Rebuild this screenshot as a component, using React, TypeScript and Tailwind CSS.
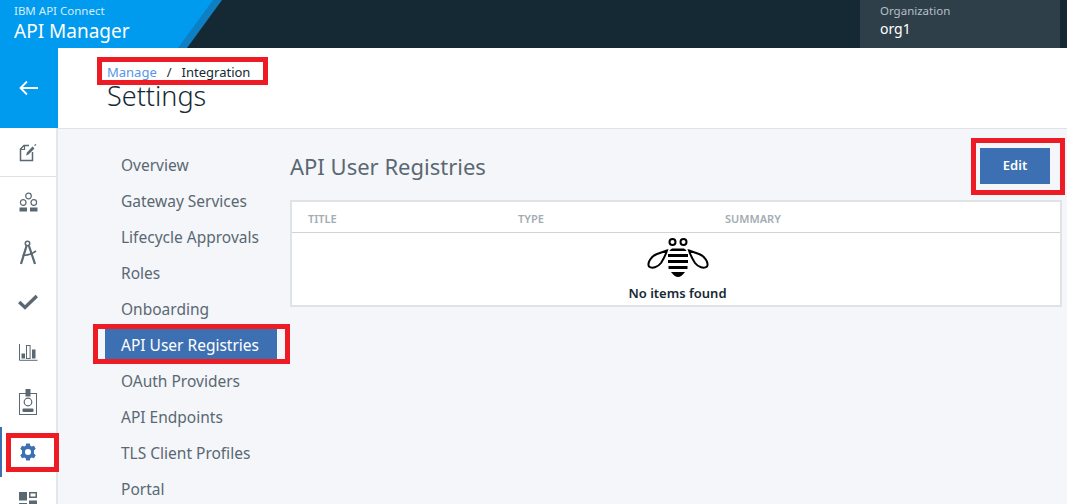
const sans = "font-['Noto_Sans','Liberation_Sans',sans-serif]";

const navItems = [
  "Overview",
  "Gateway Services",
  "Lifecycle Approvals",
  "Roles",
  "Onboarding",
  "API User Registries",
  "OAuth Providers",
  "API Endpoints",
  "TLS Client Profiles",
  "Portal",
];

function EditIcon() {
  return (
    <svg width="18" height="19" viewBox="0 0 18 19" fill="none" stroke="#5a6872" strokeWidth="1.5">
      <path d="M10 2.500H5L1.500 6V17.500H13.500V9" />
      <path d="M1.500 6.500H5.500V2.500" strokeWidth="1.2" />
      <path d="M7 12.500L8 9.500L13.500 3.500L15.500 5.500L9.500 11.500Z" fill="#5a6872" stroke="none" />
      <path d="M15.500 2.500L17 1.500" strokeWidth="1.4" />
    </svg>
  );
}

function PeopleIcon() {
  return (
    <svg width="19" height="20" viewBox="0 0 19 20" fill="none" stroke="#5a6872" strokeWidth="1.2">
      <circle cx="9.500" cy="4" r="2.800" />
      <circle cx="4.200" cy="10.500" r="2.800" />
      <circle cx="14.800" cy="10.500" r="2.800" />
      <rect x=".5" y="15.500" width="7.500" height="4" fill="#5a6872" stroke="none" />
      <rect x="11" y="15.500" width="7.500" height="4" fill="#5a6872" stroke="none" />
    </svg>
  );
}

function CompassIcon() {
  return (
    <svg width="18" height="25" viewBox="0 0 18 25" fill="none" stroke="#5a6872" strokeWidth="2.200">
      <circle cx="8.500" cy="3.500" r="2.200" strokeWidth="1.500" />
      <path d="M7.500 6L2 24" />
      <path d="M10 6L16 24" />
      <path d="M3.500 15.500C8 15.500 13 14 17 11" strokeWidth="1.700" />
    </svg>
  );
}

function CheckIcon() {
  return (
    <svg width="20" height="16" viewBox="0 0 20 16" fill="none" stroke="#5a6872" strokeWidth="3.400">
      <path d="M1.200 8L7 13.400L18.800 2" />
    </svg>
  );
}

function ChartIcon() {
  return (
    <svg width="19" height="17" viewBox="0 0 19 17" fill="none" stroke="#5a6872" strokeWidth="1">
      <path d="M.5 0V16.300H18.500" />
      <rect x="2.500" y="9.500" width="3.500" height="5" fill="#5a6872" stroke="none" />
      <rect x="7.500" y="1.500" width="3.600" height="13" />
      <rect x="13" y="5.500" width="3.500" height="9" fill="#5a6872" stroke="none" />
    </svg>
  );
}

function BadgeIcon() {
  return (
    <svg width="18" height="26" viewBox="0 0 18 26" fill="none" stroke="#5a6872" strokeWidth="1">
      <rect x=".5" y="4.500" width="17" height="21" />
      <rect x="6.500" y="0" width="5" height="7.500" fill="#5a6872" stroke="none" />
      <circle cx="9" cy="13" r="3.800" strokeWidth="1.200" />
      <rect x="3.500" y="19.500" width="11" height="3.500" rx="1" fill="#5a6872" stroke="none" />
    </svg>
  );
}

function GearIcon() {
  return (
    <svg width="18" height="18" viewBox="0 0 20 20" fill="#3d70b2">
      <path
        fillRule="evenodd"
        d="M8 .5h4l.6 2.600 1.500.8 2.500-.9 2 3.400-2 1.900v3.400l2 1.900-2 3.400-2.500-.9-1.500.8-.6 2.600H8l-.6-2.600-1.500-.8-2.500.9-2-3.400 2-1.900V8.300l-2-1.900 2-3.400 2.500.9 1.500-.8ZM10 6.600a3.400 3.400 0 1 0 0 6.800 3.400 3.400 0 0 0 0-6.800Z"
      />
    </svg>
  );
}

function DashboardIcon() {
  return (
    <svg width="18" height="20" viewBox="0 0 18 20" fill="#5a6872">
      <rect x="0" y="0" width="8" height="8.500" />
      <path fillRule="evenodd" d="M10 0h8v6h-8Zm1.500 1.500v3h5v-3Z" />
      <rect x="0" y="11" width="8" height="9" />
      <rect x="10" y="8.500" width="8" height="11.500" />
    </svg>
  );
}

function BeeIcon() {
  return (
    <svg width="62" height="40" viewBox="0 0 62 40" fill="none" stroke="#000" strokeWidth="2">
      <circle cx="25.500" cy="4" r="3" />
      <circle cx="36.500" cy="4" r="3" />
      <path d="M20 12.500L10 16C4 18 0 25 2 28.500C5 31 11 29 14 25C16.500 21 19 16 20 12.500Z" />
      <path d="M42 12.500L52 16C58 18 62 25 60 28.500C57 31 51 29 48 25C45.500 21 43 16 42 12.500Z" />
      <path d="M25 10.500H37C38.500 11.500 39 12 39.500 13H22.500C23 12 23.500 11.500 25 10.500Z" fill="#000" stroke="none" />
      <rect x="21" y="16" width="20" height="3" fill="#000" stroke="none" />
      <rect x="21" y="22" width="20" height="3" fill="#000" stroke="none" />
      <rect x="21.500" y="28" width="19" height="3" fill="#000" stroke="none" />
      <path d="M24 34H38C36 37 33 39 31 39C29 39 26 37 24 34Z" fill="#000" stroke="none" />
    </svg>
  );
}

export default function App() {
  return (
    <div className={`${sans} relative flex h-[504px] w-[1067px] flex-col overflow-hidden bg-[#f4f6fa]`}>
      {/* top bar */}
      <header className="relative flex h-12 shrink-0 justify-end bg-[#152935] pr-[7px]">
        <div className="absolute left-0 top-0 h-12 w-[222px] bg-[#0f7fc4] [clip-path:polygon(0_0,100%_0,187px_100%,0_100%)]" />
        <div className="absolute left-0 top-0 h-12 w-[213px] bg-[#009aee] [clip-path:polygon(0_0,100%_0,178px_100%,0_100%)]" />
        <div className="absolute left-[14px] top-[3px] text-white">
          <div className="text-[11.5px] leading-[16px] text-[#d6ecfa]">IBM API Connect</div>
          <div className="text-[19px] leading-[24px]">API Manager</div>
        </div>
        <div className="flex w-[200px] flex-col bg-[#2f3f4a] pl-5 pt-[3px]">
          <span className="text-[11.5px] leading-4 text-[#b5bfc6]">Organization</span>
          <span className="text-[14px] leading-5 text-white">org1</span>
        </div>
      </header>

      <div className="flex min-h-0 flex-1">
        {/* left rail */}
        <aside className="flex w-[58px] shrink-0 flex-col border-r-2 border-[#e3e6ec] bg-white">
          <div className="-mr-[2px] flex h-20 shrink-0 items-center justify-center bg-[#009aee]">
            <svg width="20" height="16" viewBox="0 0 20 16" fill="none" stroke="#fff" strokeWidth="1.800">
              <path d="M19 8H1.500M8 1.500L1.500 8L8 14.500" />
            </svg>
          </div>
          <div className="flex h-[49px] shrink-0 items-center justify-center border-b border-[#dfe3e6]">
            <EditIcon />
          </div>
          <div className="flex h-[50px] shrink-0 items-center justify-center"><PeopleIcon /></div>
          <div className="flex h-[50px] shrink-0 items-center justify-center"><CompassIcon /></div>
          <div className="flex h-[50px] shrink-0 items-center justify-center"><CheckIcon /></div>
          <div className="flex h-[50px] shrink-0 items-center justify-center"><ChartIcon /></div>
          <div className="flex h-[50px] shrink-0 items-center justify-center"><BadgeIcon /></div>
          <div className="flex h-[50px] shrink-0 items-center justify-center border-l-2 border-[#3d70b2] pr-[2px]"><GearIcon /></div>
          <div className="flex h-[50px] shrink-0 items-center justify-center"><DashboardIcon /></div>
        </aside>

        <div className="flex min-w-0 flex-1 flex-col">
          {/* page heading */}
          <div className="h-[81px] shrink-0 border-b border-[#dfe3e6] bg-white pl-[49px] pt-[15px]">
            <div className="flex h-[18px] text-[13px] leading-[18px]">
              <span className="text-[#5596e6]">Manage</span>
              <span className="ml-[10px] text-[#152935]">/</span>
              <span className="ml-[10px] text-[#152935]">Integration</span>
            </div>
            <h1 className="pt-px text-[27px] font-light leading-[28px] text-[#152935]">Settings</h1>
          </div>

          <div className="flex min-h-0 flex-1">
            {/* settings nav */}
            <nav className="w-[232px] shrink-0 pl-[47px] pt-[18px]">
              {navItems.map((item) => (
                <div
                  key={item}
                  className={
                    item === "API User Registries"
                      ? "flex h-9 w-[172px] items-center bg-[#3d70b2] pl-4 pt-[2px] text-[15.5px] text-white"
                      : "flex h-9 w-[172px] items-center pl-4 pt-[2px] text-[15.5px] text-[#5a6872]"
                  }
                >
                  {item}
                </div>
              ))}
            </nav>

            {/* registries panel */}
            <main className="min-w-0 flex-1 pr-[5px]">
              <div className="flex h-[71px] items-start justify-between pr-[12px] pt-[19px]">
                <h2 className="pt-[3px] text-[22px] leading-[30px] text-[#5a6872]">API User Registries</h2>
                <button className="h-9 w-[70px] bg-[#3d70b2] text-[13px] font-semibold text-white">Edit</button>
              </div>
              <div className="h-[107px] border-2 border-[#dfe3e6] bg-white">
                <div className="flex h-[31px] items-center border-b border-[#cfd4d8] pt-[5px] text-[11px] font-semibold text-[#a3acb3]">
                  <span className="ml-[16px] w-[210px]">TITLE</span>
                  <span className="w-[207px]">TYPE</span>
                  <span>SUMMARY</span>
                </div>
                <div className="flex flex-col items-center pl-[3px] pt-[5px]">
                  <BeeIcon />
                  <span className="mt-[6px] text-[13px] font-semibold leading-[18px] text-[#152935]">No items found</span>
                </div>
              </div>
            </main>
          </div>
        </div>
      </div>

      {/* red annotation boxes */}
      <div className="absolute left-[97px] top-[57px] h-[28px] w-[171px] border-[5px] border-[#ed1c24]" />
      <div className="absolute left-[6px] top-[433px] h-[39px] w-[53px] border-[5px] border-[#ed1c24]" />
      <div className="absolute left-[93px] top-[324px] h-[40px] w-[197px] border-[5px] border-[#ed1c24]" />
      <div className="absolute left-[971px] top-[138px] h-[57px] w-[94px] border-[5px] border-[#ed1c24]" />
    </div>
  );
}
